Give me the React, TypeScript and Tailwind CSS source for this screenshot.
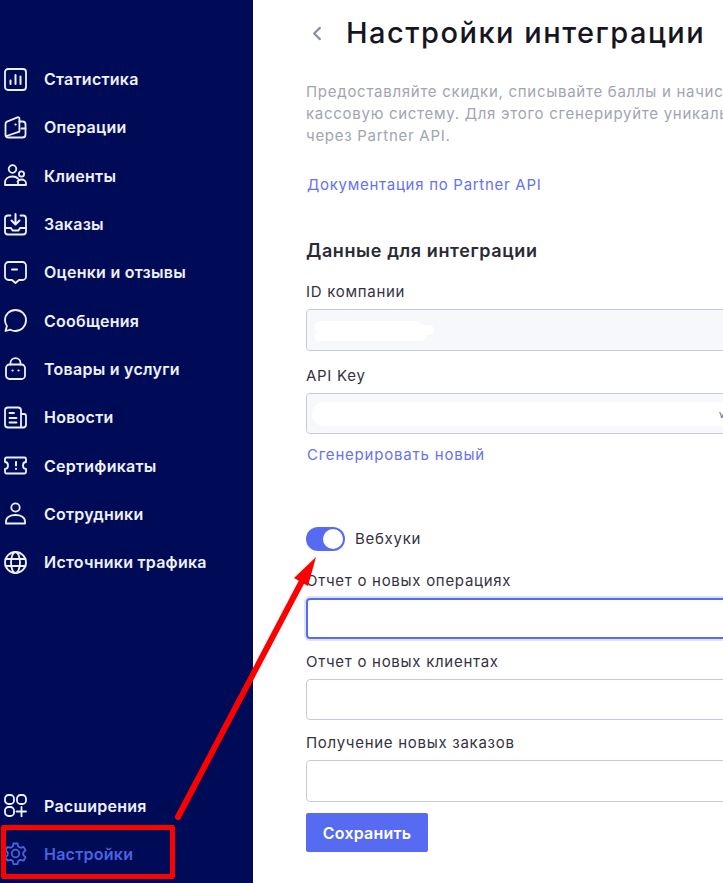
import { ReactNode } from "react";

const icons: Record<string, ReactNode> = {
  stats: (
    <>
      <rect x="1" y="1" width="21" height="21" rx="3" />
      <path d="M6.500 16v-3.500M11.500 16V7M16.500 16V8.500" strokeWidth="2" />
    </>
  ),
  wallet: (
    <>
      <path d="M1.500 18.500V8c0-1.100.6-1.900 1.500-2.400L13.500 1.300c1-.4 1.900.2 1.900 1.300V5.500h3.100c1.700 0 3 1.300 3 3v10c0 1.700-1.300 3-3 3h-14c-1.700 0-3-1.300-3-3z" />
      <path d="M15.400 5.500v10.200L2.500 20M17.500 12.500h4" />
      <path d="M11.500 8.500h.1" strokeWidth="2.200" />
    </>
  ),
  clients: (
    <>
      <circle cx="8.500" cy="5" r="3.800" />
      <circle cx="17.500" cy="10" r="2.600" />
      <path d="M1 21v-2.500c0-3.500 3-6 7.500-6 2.200 0 4.200.7 5.500 2M1 21h21v-1.500c0-2.300-2-4-4.500-4-1.800 0-3.300.8-4 2M14 21v-3.500" />
    </>
  ),
  orders: (
    <>
      <path d="M6.500 2.500H4c-1.700 0-3 1.300-3 3v13c0 1.700 1.300 3 3 3h15c1.700 0 3-1.300 3-3v-13c0-1.700-1.300-3-3-3h-2.500" />
      <path d="M11.500 1v10M7.500 7.500l4 4 4-4" strokeWidth="2" />
      <path d="M1 15h6l1.500 2.500h6L16 15h6" />
    </>
  ),
  review: (
    <>
      <path d="M4.500 1h14C20.400 1 22 2.600 22 4.500v11c0 1.900-1.600 3.500-3.500 3.500H15l-3.500 3L8 19H4.500C2.600 19 1 17.400 1 15.500v-11C1 2.600 2.600 1 4.500 1z" />
      <path d="M8 8.500h5" strokeWidth="2" />
    </>
  ),
  message: <path d="M11.500 1c5.800 0 10.500 4.500 10.500 10.300S17.300 22 11.500 22c-1.800 0-3.500-.4-5-1.300L1.500 22l1.400-5C1.700 15.300 1 13.400 1 11.300 1 5.500 5.700 1 11.500 1z" />,
  bag: (
    <>
      <path d="M6.500 7.500V6c0-2.700 2.200-4.800 5-4.800s5 2.100 5 4.800v1.500" />
      <rect x="2" y="7.500" width="19" height="14.500" rx="3.500" />
      <path d="M8.500 13.500h.1M14.500 13.500h.1" strokeWidth="2.200" />
    </>
  ),
  news: (
    <>
      <path d="M17 21.500H4c-1.700 0-3-1.300-3-3V4.500c0-1.700 1.300-3 3-3h10c1.700 0 3 1.300 3 3v17zM17 8h3c1.100 0 2 .9 2 2v8.500c0 1.700-1.300 3-2.800 3H17" />
      <path d="M5.500 7h4.500v.1M5.500 12h7M5.500 16.500h7" strokeWidth="1.800" />
    </>
  ),
  ticket: (
    <>
      <path d="M2.500 3.500h18c.8 0 1.500.7 1.500 1.500v3c-1.700 0-3 1.500-3 3.400s1.300 3.400 3 3.400V18c0 .8-.7 1.500-1.500 1.500h-18C1.700 19.500 1 18.800 1 18v-3.200c1.700 0 3-1.500 3-3.400S2.700 8 1 8V5c0-.8.700-1.500 1.500-1.500z" />
      <path d="M12 8v3.500M12 14.800v.1" strokeWidth="2" />
    </>
  ),
  user: (
    <>
      <circle cx="11.500" cy="5.500" r="4.200" />
      <path d="M2 21.500v-2c0-4 4-6.500 9.500-6.500s9.500 2.500 9.500 6.500v2z" />
    </>
  ),
  globe: (
    <>
      <circle cx="11.500" cy="11.500" r="10.500" />
      <ellipse cx="11.500" cy="11.500" rx="4.500" ry="10.500" />
      <path d="M1.500 8h20M1.500 15h20" />
    </>
  ),
  ext: (
    <>
      <rect x="1" y="1" width="9" height="9" rx="3.500" />
      <rect x="13" y="1" width="9" height="9" rx="3.500" />
      <rect x="1" y="13" width="9" height="9" rx="3.500" />
      <path d="M17.500 13v9.500M12.500 17.500H22" />
    </>
  ),
  gear: (
    <>
      <circle cx="11.500" cy="11.500" r="3.800" />
      <path d="M9.500 1.500h4l.7 3 2.300 1.300 3-.9 2 3.500-2.200 2.100v2.600l2.200 2.100-2 3.500-3-.9-2.300 1.300-.7 3h-4l-.7-3-2.300-1.300-3 .9-2-3.500 2.200-2.100v-2.600L1.500 8.400l2-3.500 3 .9 2.300-1.300z" />
    </>
  ),
};

function NavIcon({ name }: { name: string }) {
  return (
    <svg viewBox="0 0 23 23" fill="none" stroke="currentColor" strokeWidth="1.800" strokeLinecap="round" strokeLinejoin="round" className="h-[23px] w-[23px] shrink-0">
      {icons[name]}
    </svg>
  );
}

function NavItem({ icon, label, active }: { icon: string; label: string; active?: boolean }) {
  return (
    <div className={"flex h-[48.3px] items-center gap-[17px] pl-[4px] " + (active ? "text-[#4a63e0]" : "text-[#eef1fb]")}>
      <NavIcon name={icon} />
      <span className="text-[16px] font-semibold tracking-[0.25px]">{label}</span>
    </div>
  );
}

const topItems = [
  ["stats", "Статистика"],
  ["wallet", "Операции"],
  ["clients", "Клиенты"],
  ["orders", "Заказы"],
  ["review", "Оценки и отзывы"],
  ["message", "Сообщения"],
  ["bag", "Товары и услуги"],
  ["news", "Новости"],
  ["ticket", "Сертификаты"],
  ["user", "Сотрудники"],
  ["globe", "Источники трафика"],
];

function Field({ label, focused, tall, className, children }: { label: string; focused?: boolean; tall?: boolean; className?: string; children?: ReactNode }) {
  return (
    <div className={className}>
      <div className="h-[22px] text-[15px] leading-[22px] tracking-[0.72px] text-[#33333f]">{label}</div>
      <div
        className={
          "relative mt-[6px] w-[460px] rounded-[4px] border " +
          (tall ? "h-[42px] " : "h-[41px] ") +
          (focused ? "border-2 border-[#566bf2] shadow-[0_0_0_2px_#dfe3fb]" : "border-[#c4c9dc]")
        }
      >
        {children}
      </div>
    </div>
  );
}

export default function App() {
  return (
    <div className="relative flex h-[883px] w-[723px] overflow-hidden bg-white font-['Inter',sans-serif]">
      <aside className="flex w-[253px] shrink-0 flex-col bg-[#000b57] pb-[5px] pt-[55px]">
        {topItems.map(([icon, label]) => (
          <NavItem key={label} icon={icon} label={label} />
        ))}
        <div className="mt-auto">
          <NavItem icon="ext" label="Расширения" />
          <NavItem icon="gear" label="Настройки" active />
        </div>
      </aside>

      <main className="min-w-0 flex-1 pl-[53px]">
        <div className="flex h-[66px] items-center">
          <svg viewBox="0 0 10 16" fill="none" stroke="#8a90a6" strokeWidth="2.400" strokeLinecap="round" strokeLinejoin="round" className="ml-[6px] h-[15px] w-[10px]">
            <path d="M8 2L2 8l6 6" />
          </svg>
          <h1 className="ml-[24px] whitespace-nowrap text-[29px] font-medium tracking-[1.5px] text-[#17151f]">Настройки интеграции</h1>
        </div>

        <p className="mt-[15px] whitespace-nowrap text-[15px] leading-[22px] tracking-[0.72px] text-[#a1a5b2]">
          Предоставляйте скидки, списывайте баллы и начисляйте
          <br />
          кассовую систему. Для этого сгенерируйте уникальный
          <br />
          через Partner API.
        </p>
        <a className="mt-[27px] block pl-[1px] text-[15px] leading-[22px] tracking-[0.72px] text-[#6672ef]">Документация по Partner API</a>

        <h2 className="mt-[43px] text-[18px] font-semibold leading-[24px] tracking-[0.6px] text-[#2a2a35]">Данные для интеграции</h2>

        <Field label="ID компании" tall className="mt-[18px]">
          <div className="absolute inset-0 rounded-[4px] bg-[#f7f8fc]" />
          <div className="absolute left-[7px] top-[11px] h-[12px] w-[108px] rounded-full bg-white" />
          <div className="absolute left-[7px] top-[21px] h-[10px] w-[112px] rounded-full bg-white" />
          <div className="absolute left-[100px] top-[15px] h-[10px] w-[27px] rounded-full bg-white" />
        </Field>
        <Field label="API Key" className="mt-[14px]">
          <div className="absolute inset-0 rounded-[4px] bg-[#f7f8fc]" />
          <div className="absolute left-[5px] top-[8px] h-[24px] w-[440px] rounded-full bg-white" />
          <span className="absolute left-[412px] top-[13px] text-[10px] leading-[14px] text-[#5a6070]">v</span>
        </Field>
        <a className="mt-[10px] block pl-[1px] text-[15px] leading-[22px] tracking-[0.8px] text-[#6672ef]">Сгенерировать новый</a>

        <div className="mt-[61px] flex h-[24px] items-center gap-[10px]">
          <div className="flex h-[24px] w-[39px] items-center justify-end rounded-full bg-[#566bf2] pr-[2px]">
            <div className="h-[20px] w-[20px] rounded-full bg-white" />
          </div>
          <span className="text-[15px] tracking-[0.72px] text-[#33333f]">Вебхуки</span>
        </div>

        <Field label="Отчет о новых операциях" focused className="mt-[19px]" />
        <Field label="Отчет о новых клиентах" className="mt-[12px]" />
        <Field label="Получение новых заказов" tall className="mt-[12px]" />

        <button className="mt-[11px] h-[39px] w-[122px] rounded-[2px] bg-[#566bf2] text-[16px] font-semibold tracking-[0.2px] text-white">Сохранить</button>
      </main>

      {/* annotation drawn over the screenshot */}
      <div className="absolute left-[1px] top-[825px] h-[54px] w-[174px] rounded-[2px] border-[5px] border-[#ff0000]" />
      <svg className="pointer-events-none absolute inset-0 h-[883px] w-[723px]" viewBox="0 0 723 883">
        <path d="M178 817L301 583" stroke="#ff0000" strokeWidth="6" strokeLinecap="round" />
        <polygon points="316,557 294,578 308,586" fill="#ff0000" />
      </svg>
    </div>
  );
}
